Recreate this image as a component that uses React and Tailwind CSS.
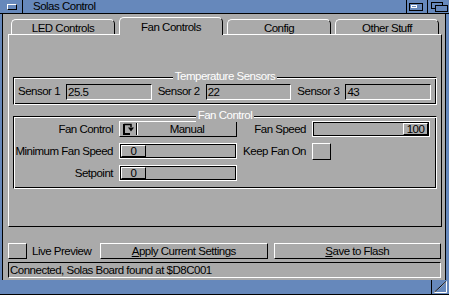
import React from 'react';

const raised = 'border border-t-white border-l-white border-b-black border-r-black';
const recessed = 'border border-t-black border-l-black border-b-white border-r-white';
const groove = 'border border-t-black border-l-black border-b-white border-r-white shadow-[inset_1px_1px_0_#fff,inset_-1px_-1px_0_#000]';

function Tab({ label, active }) {
  if (active) {
    return (
      <div className="relative z-10 flex-1 h-[18px] -mb-px bg-[#aaaaaa] border-t border-l border-r border-t-white border-l-white border-r-black rounded-t-[5px] flex justify-center pt-[1px]">
        {label}
      </div>
    );
  }
  return (
    <div className="flex-1 h-[15px] mt-[2px] border-t border-l border-r border-t-white border-l-white border-r-black rounded-t-[5px] flex justify-center">
      {label}
    </div>
  );
}

function Group({ title, className, children }) {
  return (
    <div className={`relative mx-[4px] ${groove} ${className}`}>
      <div className="absolute -top-[9px] left-0 right-0 flex justify-center">
        <span className="bg-[#aaaaaa] px-[2px] text-white leading-[14px]">{title}</span>
      </div>
      {children}
    </div>
  );
}

function Field({ value }) {
  return (
    <div className={`flex-1 h-[16px] ${recessed} pl-[1px] leading-[14px]`}>{value}</div>
  );
}

function Slider({ value, right }) {
  return (
    <div className="h-[16px] border border-white shadow-[inset_1px_1px_0_#000,inset_-1px_-1px_0_#000] p-[1px] flex">
      {right && <div className="flex-1" />}
      <div className={`w-[25px] h-[12px] ${raised} flex justify-center leading-[10px]`}>{value}</div>
    </div>
  );
}

function CycleIcon() {
  return (
    <svg width="14" height="12" viewBox="0 0 14 12">
      <path d="M3 1.5 H10 V4" fill="none" stroke="#000" strokeWidth="1.5" />
      <path d="M3 1 V11 H9" fill="none" stroke="#000" strokeWidth="2" />
      <path d="M7 4.5 H13 L10 8.5 Z" fill="#000" />
    </svg>
  );
}

export default function App() {
  return (
    <div
      className="w-[449px] h-[295px] bg-[#6688bb] flex flex-col overflow-hidden text-black text-[11.5px] tracking-[-0.5px] whitespace-nowrap"
      style={{ fontFamily: '"Liberation Sans", Arial, sans-serif' }}
    >
      {/* Title bar */}
      <div className="h-[14px] flex border-b border-black">
        <div className="w-[23px] border-r border-black pl-[7px] pt-[4px]">
          <div className="w-[10px] h-[6px] border border-t-white border-l-white border-b-black border-r-black" />
        </div>
        <div className="flex-1 pl-[10px] leading-[13px]">Solas Control</div>
        <div className="w-[21px] border-l border-black pl-[2px] pt-[3px]">
          <div className="w-[14px] h-[8px] border border-black relative">
            <div className="absolute left-[1px] top-[1px] w-[6px] h-[3px] border border-white" />
          </div>
        </div>
        <div className="w-[22px] border-l border-black relative">
          <div className="absolute left-[3px] top-[2px] w-[12px] h-[7px] border border-black bg-[#6688bb]" />
          <div className="absolute left-[7px] top-[5px] w-[13px] h-[7px] border border-black bg-[#6688bb]" />
        </div>
      </div>

      {/* Body */}
      <div className="flex h-[266px]">
        <div className="w-[2px]" />
        <div className="flex-1 bg-[#aaaaaa] border-l border-r border-black flex flex-col">
          {/* Tabs */}
          <div className="ml-[5px] mr-[3px] pt-[3px] flex gap-[4px] px-[3px] h-[20px]">
            <Tab label="LED Controls" />
            <Tab label="Fan Controls" active />
            <Tab label="Config" />
            <Tab label="Other Stuff" />
          </div>

          {/* Panel */}
          <div className="ml-[5px] mr-[3px] h-[193px] border border-t-white border-l-white border-b-black border-r-black">
            <Group title="Temperature Sensors" className="mt-[42px] pt-[6px] pb-[4px] pl-[4px] pr-[5px]">
              <div className="flex items-center gap-[6px] h-[16px]">
                <span>Sensor 1</span>
                <Field value="25.5" />
                <span>Sensor 2</span>
                <Field value="22" />
                <span>Sensor 3</span>
                <Field value="43" />
              </div>
            </Group>

            <Group title="Fan Control" className="mt-[11px] pt-[4px] pb-[7px] pl-[4px] pr-[5px]">
              <div className="grid grid-cols-[95px_118px_63px_118px] gap-x-[6px] gap-y-[6px] auto-rows-[16px]">
                <div className="text-right leading-[16px]">Fan Control</div>
                <div className={`${raised} flex items-center`}>
                  <div className="w-[16px] pl-[1px] flex items-center">
                    <CycleIcon />
                  </div>
                  <div className="w-[2px] h-[12px] border-l border-r border-l-black border-r-white" />
                  <div className="flex-1 text-center leading-[14px]">Manual</div>
                </div>
                <div className="text-right leading-[16px]">Fan Speed</div>
                <Slider value="100" right />

                <div className="flex justify-end leading-[16px]">Minimum Fan Speed</div>
                <Slider value="0" />
                <div className="text-right leading-[16px]">Keep Fan On</div>
                <div className={`w-[19px] h-[17px] ${raised}`} />

                <div className="text-right leading-[16px]">Setpoint</div>
                <Slider value="0" />
              </div>
            </Group>
          </div>

          {/* Bottom row */}
          <div className="ml-[5px] mr-[4px] mt-[16px] h-[16px] flex items-center">
            <div className={`w-[19px] h-[16px] ${raised}`} />
            <div className="w-[62px] ml-[5px] leading-[16px]">Live Preview</div>
            <div className={`flex-1 ml-[6px] h-[16px] ${raised} text-center leading-[14px]`}>
              <span className="underline underline-offset-1">A</span>pply Current Settings
            </div>
            <div className={`flex-1 ml-[6px] h-[16px] ${raised} text-center leading-[14px]`}>
              <span className="underline underline-offset-1">S</span>ave to Flash
            </div>
          </div>

          {/* Status */}
          <div className={`ml-[5px] mr-[4px] mt-[3px] h-[16px] ${recessed} pl-[1px] leading-[14px]`}>
            Connected, Solas Board found at $D8C001
          </div>
        </div>
        <div className="w-[3px]" />
      </div>

      {/* Bottom border */}
      <div className="h-[15px] border-b border-black flex justify-end">
        <div className="w-[18px] border-l border-black">
          <svg width="17" height="14" viewBox="0 0 17 14">
            <path d="M2 12.5 H14.5 V1.5 Z" fill="none" stroke="#fff" strokeWidth="1" />
            <path d="M2.5 12 L14 1.5" stroke="#000" strokeWidth="1" />
          </svg>
        </div>
      </div>
    </div>
  );
}
